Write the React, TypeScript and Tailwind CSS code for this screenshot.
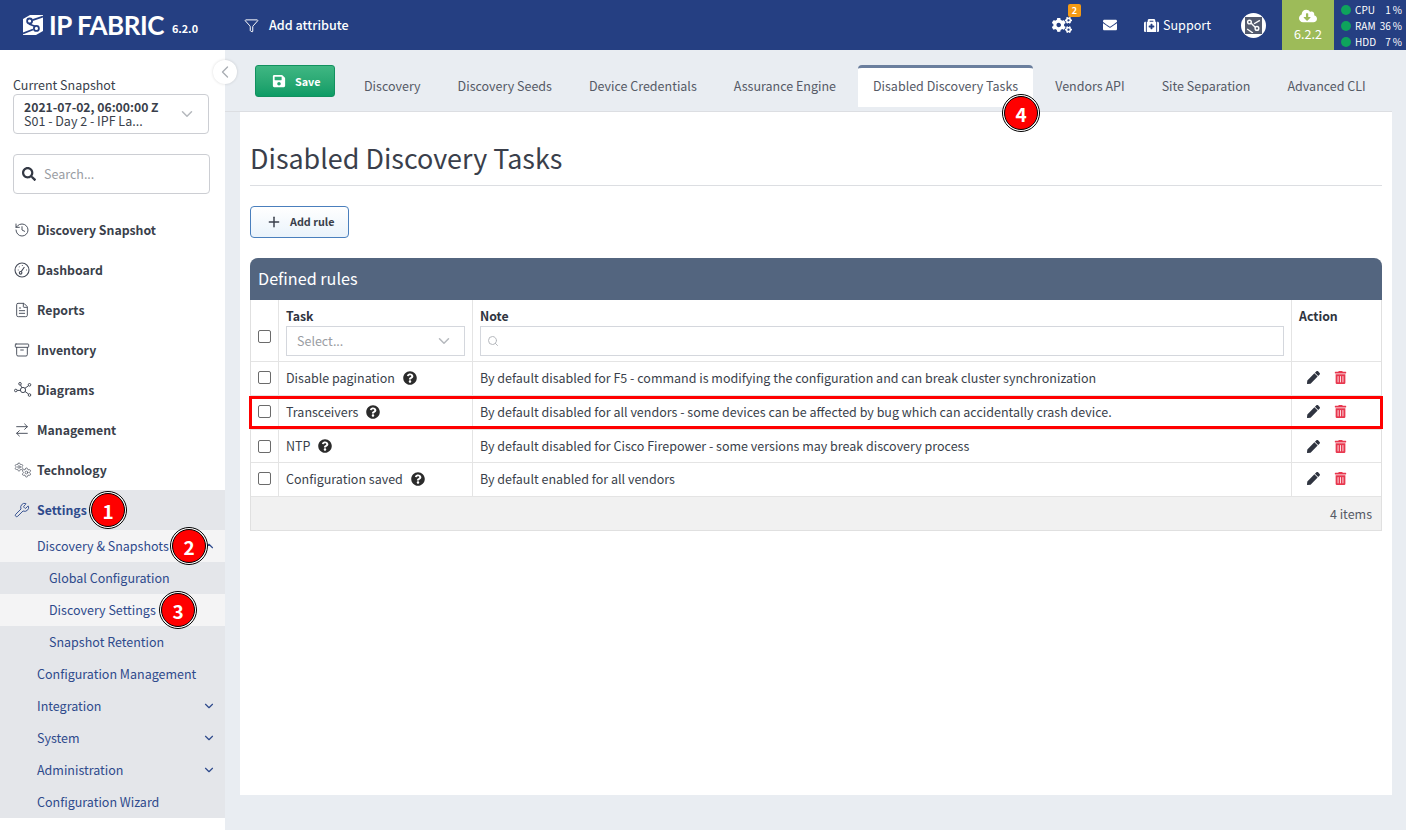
import React from 'react';
import { Archive, ArrowRightLeft, ChevronDown, ChevronLeft, ChevronUp, FileText, Funnel, History, Plus, Search as SearchThin, Settings, Wrench } from 'lucide-react';
import { FaCloudDownloadAlt, FaCogs, FaEnvelope, FaMedkit, FaPen, FaQuestionCircle, FaSave, FaSearch, FaTrashAlt } from 'react-icons/fa';

const font = { fontFamily: '"Noto Sans CJK JP", "Noto Sans", sans-serif' };

const tabs = ['Discovery', 'Discovery Seeds', 'Device Credentials', 'Assurance Engine', 'Disabled Discovery Tasks', 'Vendors API', 'Site Separation', 'Advanced CLI'];

const rules = [
  { task: 'Disable pagination', note: 'By default disabled for F5 - command is modifying the configuration and can break cluster synchronization' },
  { task: 'Transceivers', note: 'By default disabled for all vendors - some devices can be affected by bug which can accidentally crash device.', marked: true },
  { task: 'NTP', note: 'By default disabled for Cisco Firepower - some versions may break discovery process', short: true },
  { task: 'Configuration saved', note: 'By default enabled for all vendors' },
];

const stats = [
  { name: 'CPU', value: '1' },
  { name: 'RAM', value: '36' },
  { name: 'HDD', value: '7' },
];

const GaugeIcon = () => (
  <svg width="16" height="16" viewBox="0 0 16 16" fill="none" stroke="currentColor" strokeWidth="1.1">
    <circle cx="8" cy="8" r="7" />
    <circle cx="6.6" cy="10.8" r="1.3" />
    <path d="M7.2 9.6 10.4 5M3.8 8h.8M5 4.6l.5.5M8.4 3.2v.8M12 8h.8" />
  </svg>
);

const DiagramIcon = () => (
  <svg width="18" height="16" viewBox="0 0 18 16" fill="none" stroke="currentColor" strokeWidth="1">
    <circle cx="9" cy="8" r="2.6" />
    <circle cx="1.8" cy="8.5" r="1.3" />
    <circle cx="6" cy="1.8" r="1.3" />
    <circle cx="15.5" cy="2.8" r="1.3" />
    <circle cx="15.5" cy="13" r="1.3" />
    <path d="M3.1 8.4h3.3M6.6 3l1.2 2.7M14.5 3.7l-3.6 2.6M14.5 12l-3.6-2.6" />
  </svg>
);

const GearsIcon = () => (
  <span className="relative block h-[16px] w-[18px]">
    <Settings size={10} strokeWidth={1.6} className="absolute left-0 top-0" />
    <Settings size={11} strokeWidth={1.5} className="absolute bottom-0 right-0" />
  </span>
);

const LogoMark = () => (
  <svg width="20" height="20" viewBox="0 0 20 20" fill="none">
    <rect width="20" height="20" fill="#ffffff" />
    <path d="M20 1.5 L9.5 5.2 M6 9 L12.5 11.5 M10 14.5 L0 18.5" stroke="#253f82" strokeWidth="1.8" />
    <circle cx="6.6" cy="6" r="2.5" stroke="#253f82" strokeWidth="1.8" />
    <circle cx="13.4" cy="13.4" r="2.5" stroke="#253f82" strokeWidth="1.8" />
    <path d="M0 0 H7 L0 4 Z M20 20 H13 L20 16 Z" fill="#253f82" />
  </svg>
);

const NavItem = ({ icon, label }: { icon: React.ReactNode; label: string }) => (
  <div className="flex h-10 items-center text-[12.3px] leading-5 font-bold text-[#3a3f4b]">
    <span className="flex w-[37px] shrink-0 pl-[14px] text-[#444a57]">{icon}</span>
    {label}
  </div>
);

const SubItem = ({ label, deep, active, chevron }: { label: string; deep?: boolean; active?: boolean; chevron?: 'up' | 'down' }) => (
  <div className={`flex h-8 items-center justify-between pr-[9px] text-[12.5px] leading-5 text-[#2e4a8c] ${deep ? 'pl-[49px]' : 'pl-[37px]'} ${active ? 'bg-[#f4f4f5]' : ''}`}>
    {label}
    {chevron === 'down' && <ChevronDown size={14} strokeWidth={2} />}
    {chevron === 'up' && <ChevronUp size={14} strokeWidth={2} />}
  </div>
);

const Marker = ({ n, className }: { n: number; className: string }) => (
  <div className={`absolute z-20 flex h-[38px] w-[38px] items-center justify-center rounded-full border border-black bg-white ${className}`}>
    <span className="flex h-[34px] w-[34px] items-center justify-center rounded-full border border-black bg-[#ff0000] text-[19px] leading-none font-bold text-white">{n}</span>
  </div>
);

const Checkbox = () => <span className="block h-[13px] w-[13px] rounded-[2px] border border-[#6b6b6b] bg-white" />;

const Header = () => (
  <header className="flex h-[50px] shrink-0 items-center bg-[#253f82] text-white">
    <div className="ml-[23px] flex w-[221px] items-center">
      <LogoMark />
      <span className="ml-[6px] text-[26px] leading-none font-bold tracking-[-0.5px]" style={{ fontFamily: '"Lato", sans-serif' }}>IP FABRIC</span>
      <span className="ml-2 mt-[6px] text-[10.8px] leading-none font-bold">6.2.0</span>
    </div>
    <Funnel size={15} strokeWidth={1.6} />
    <span className="ml-[10px] text-[12.6px] leading-5 font-medium">Add attribute</span>
    <div className="ml-auto flex h-full items-center">
      <div className="relative flex w-[20px] items-center">
        <FaCogs size={20} />
        <span className="absolute -top-[11px] left-[16px] flex h-[13px] w-[13px] items-center justify-center rounded-[2px] bg-[#f59a14] text-[9px] leading-none font-bold">2</span>
      </div>
      <FaEnvelope size={14} className="ml-[31px]" />
      <FaMedkit size={15} className="ml-[27px]" />
      <span className="ml-[4px] text-[12.6px] leading-5">Support</span>
      <div className="ml-[30px] flex h-[25px] w-[25px] items-center justify-center rounded-full bg-white">
        <div className="flex h-[17px] w-[17px] items-center justify-center bg-[#545b6e]">
          <svg width="15" height="15" viewBox="0 0 13 13" fill="none" stroke="#ffffff" strokeWidth="1.2">
            <circle cx="3" cy="3.5" r="1.6" />
            <circle cx="9.5" cy="9" r="1.6" />
            <path d="M4.5 4.5 8 8M12 2 7 5M6 13 1 9.5" />
          </svg>
        </div>
      </div>
      <div className="ml-[16px] flex h-full w-[52px] flex-col items-center justify-center bg-[#9dbb59]">
        <FaCloudDownloadAlt size={18} />
        <span className="text-[12.6px] leading-[18px]">6.2.2</span>
      </div>
      <div className="flex w-[72px] flex-col gap-[2px] pl-[7px] pr-[4px] pt-[2px] text-[10px] leading-[14px]">
        {stats.map((s) => (
          <div key={s.name} className="flex items-center">
            <span className="h-[10px] w-[10px] rounded-full bg-[#0ea35c]" />
            <span className="ml-[4px]">{s.name}</span>
            <span className="ml-auto">{s.value}<span className="ml-[2px]">%</span></span>
          </div>
        ))}
      </div>
    </div>
  </header>
);

const Sidebar = () => (
  <aside className="relative z-10 w-[225px] shrink-0 bg-white">
    <button className="absolute left-[213px] top-[10px] z-10 flex h-6 w-6 items-center justify-center rounded-full bg-white text-[#a9adb3] shadow-[0_0_3px_rgba(0,0,0,0.15)]">
      <ChevronLeft size={20} strokeWidth={1.6} />
    </button>
    <div className="px-[13px] pt-[27px]">
      <div className="text-[12.5px] leading-[16px] text-[#3a3f4b]">Current Snapshot</div>
      <div className="mt-[1px] flex h-10 w-[196px] items-center justify-between rounded-[4px] border border-[#ccced3] pl-[10px] pr-[12px]">
        <div className="text-[12.2px] leading-[14.5px] text-[#3a3f4b]">
          <div className="font-bold">2021-07-02, 06:00:00 Z</div>
          <div className="text-[12.5px]">S01 - Day 2 - IPF La...</div>
        </div>
        <ChevronDown size={18} className="text-[#b5b8bd]" />
      </div>
      <div className="mt-[20px] flex h-10 w-[197px] items-center rounded-[4px] border border-[#ccced3] pl-[8px]">
        <FaSearch size={14} className="text-[#333844]" />
        <span className="ml-[8px] text-[12.5px] leading-5 text-[#9a9da3]">Search...</span>
      </div>
    </div>
    <nav className="mt-[16px]">
      <NavItem icon={<History size={16} strokeWidth={1.4} />} label="Discovery Snapshot" />
      <NavItem icon={<GaugeIcon />} label="Dashboard" />
      <NavItem icon={<FileText size={16} strokeWidth={1.4} />} label="Reports" />
      <NavItem icon={<Archive size={16} strokeWidth={1.4} />} label="Inventory" />
      <NavItem icon={<DiagramIcon />} label="Diagrams" />
      <NavItem icon={<ArrowRightLeft size={16} strokeWidth={1.4} />} label="Management" />
      <NavItem icon={<GearsIcon />} label="Technology" />
      <div className="bg-[#e4e6ea]">
        <div className="flex h-10 items-center text-[12.3px] leading-5 font-bold text-[#2e4a8c]">
          <span className="flex w-[37px] shrink-0 pl-[14px]"><Wrench size={16} strokeWidth={1.4} /></span>
          Settings
        </div>
        <SubItem label="Discovery & Snapshots" active chevron="up" />
        <SubItem label="Global Configuration" deep />
        <SubItem label="Discovery Settings" deep active />
        <SubItem label="Snapshot Retention" deep />
        <SubItem label="Configuration Management" />
        <SubItem label="Integration" chevron="down" />
        <SubItem label="System" chevron="down" />
        <SubItem label="Administration" chevron="down" />
        <SubItem label="Configuration Wizard" />
      </div>
    </nav>
    <Marker n={1} className="left-[89px] top-[441px]" />
    <Marker n={2} className="left-[170px] top-[477px]" />
    <Marker n={3} className="left-[159px] top-[541px]" />
  </aside>
);

const Tabs = () => (
  <div className="flex h-[62px] items-start border-b border-[#dcdee2] pl-[30px] pt-[15px]">
    <button className="flex h-[32px] w-[80px] items-center rounded-[3px] border border-[#12915f] bg-gradient-to-b from-[#3fb783] to-[#0c9c66] pl-[16px] text-[10.8px] leading-none font-bold text-white">
      <FaSave size={14} />
      <span className="ml-[9px]">Save</span>
    </button>
    <div className="ml-[14px] flex gap-[7px]">
      {tabs.map((t) => (
        <div
          key={t}
          className={`flex h-[42px] items-center whitespace-nowrap rounded-t-[4px] px-[15px] text-[12.5px] leading-5 text-[#555a66] ${t === 'Disabled Discovery Tasks' ? 'border-t-[3px] border-[#6b7f9e] bg-white pb-[3px]' : ''}`}
        >
          {t}
        </div>
      ))}
    </div>
  </div>
);

const RuleRow = ({ task, note, marked, short }: { task: string; note: string; marked?: boolean; short?: boolean }) => {
  const lift = short ? '' : 'pb-[2px]';
  return (
    <div className={`relative grid grid-cols-[28px_194px_819px_1fr] border-b border-[#e4e4e4] text-[12.5px] leading-5 text-[#3a3f4b] ${short ? 'h-[33px]' : 'h-[34px]'}`}>
      <div className={`flex items-center justify-center border-r border-[#e4e4e4] ${lift}`}><Checkbox /></div>
      <div className={`flex items-center border-r border-[#e4e4e4] pl-[7px] ${lift}`}>
        {task}
        <FaQuestionCircle size={14} className="ml-[8px] text-[#2b2b2b]" />
      </div>
      <div className={`flex items-center border-r border-[#e4e4e4] pl-[7px] ${lift}`}>{note}</div>
      <div className={`flex items-center pl-[15px] text-[#2f3440] ${lift}`}>
        <FaPen size={13} />
        <FaTrashAlt size={13} className="ml-[14px] text-[#e8384f]" />
      </div>
      {marked && <div className="absolute -left-[2px] -right-[2px] top-0 bottom-0 border-[3px] border-[#ff0000]" />}
    </div>
  );
};

const RulesTable = () => (
  <section className="mt-[20px] rounded-t-[8px] border-x border-b border-[#e0e0e0]">
    <div className="-mx-[1px] flex h-[42px] items-center rounded-t-[8px] bg-[#53657f] pb-[2px] pl-[8px] text-[16.2px] leading-6 text-white">Defined rules</div>
    <div className="grid h-[62px] grid-cols-[28px_194px_819px_1fr] border-b border-[#e4e4e4] text-[12.5px] leading-5 text-[#2f3440]">
      <div className="flex items-center justify-center border-r border-[#e4e4e4] pt-[12px]"><Checkbox /></div>
      <div className="border-r border-[#e4e4e4] px-[7px] pt-[6px]">
        <div className="text-[12.3px] font-bold">Task</div>
        <div className="flex h-[30px] items-center justify-between border border-[#d4d7dd] pl-[10px] pr-[11px] text-[#9a9da3]">
          Select...
          <ChevronDown size={18} className="text-[#b5b8bd]" />
        </div>
      </div>
      <div className="border-r border-[#e4e4e4] px-[7px] pt-[6px]">
        <div className="text-[12.3px] font-bold">Note</div>
        <div className="flex h-[30px] items-center border border-[#d4d7dd] pl-[6px] text-[#b5b8bd]">
          <SearchThin size={12} />
        </div>
      </div>
      <div className="pl-[7px] pt-[6px] text-[12.3px] font-bold">Action</div>
    </div>
    {rules.map((r) => (
      <RuleRow key={r.task} {...r} />
    ))}
    <div className="flex h-[33px] items-center justify-end bg-[#f1f1f1] pr-[9px] text-[12.5px] leading-5 text-[#555a66]">4 items</div>
  </section>
);

export default function App() {
  return (
    <div className="flex h-[830px] flex-col overflow-hidden bg-[#e9edf2]" style={font}>
      <Header />
      <div className="flex flex-1">
        <Sidebar />
        <main className="relative w-[1167px]">
          <Tabs />
          <div className="ml-[15px] h-[683px] bg-white px-[10px] pt-[25px]">
            <h1 className="border-b border-[#dcdee2] pb-[6px] text-[26.9px] leading-[42px] font-normal text-[#3a3f4b]">Disabled Discovery Tasks</h1>
            <button className="mt-[20px] flex h-[32px] w-[99px] items-center rounded-[4px] border border-[#4a7fbd] bg-gradient-to-b from-white to-[#eaf3fb] pb-[1px] pl-[15px] text-[10.8px] leading-none font-bold text-[#3a3f4b]">
              <Plus size={16} strokeWidth={2.2} />
              <span className="ml-[8px]">Add rule</span>
            </button>
            <RulesTable />
          </div>
          <Marker n={4} className="left-[777px] top-[44px]" />
        </main>
      </div>
    </div>
  );
}
